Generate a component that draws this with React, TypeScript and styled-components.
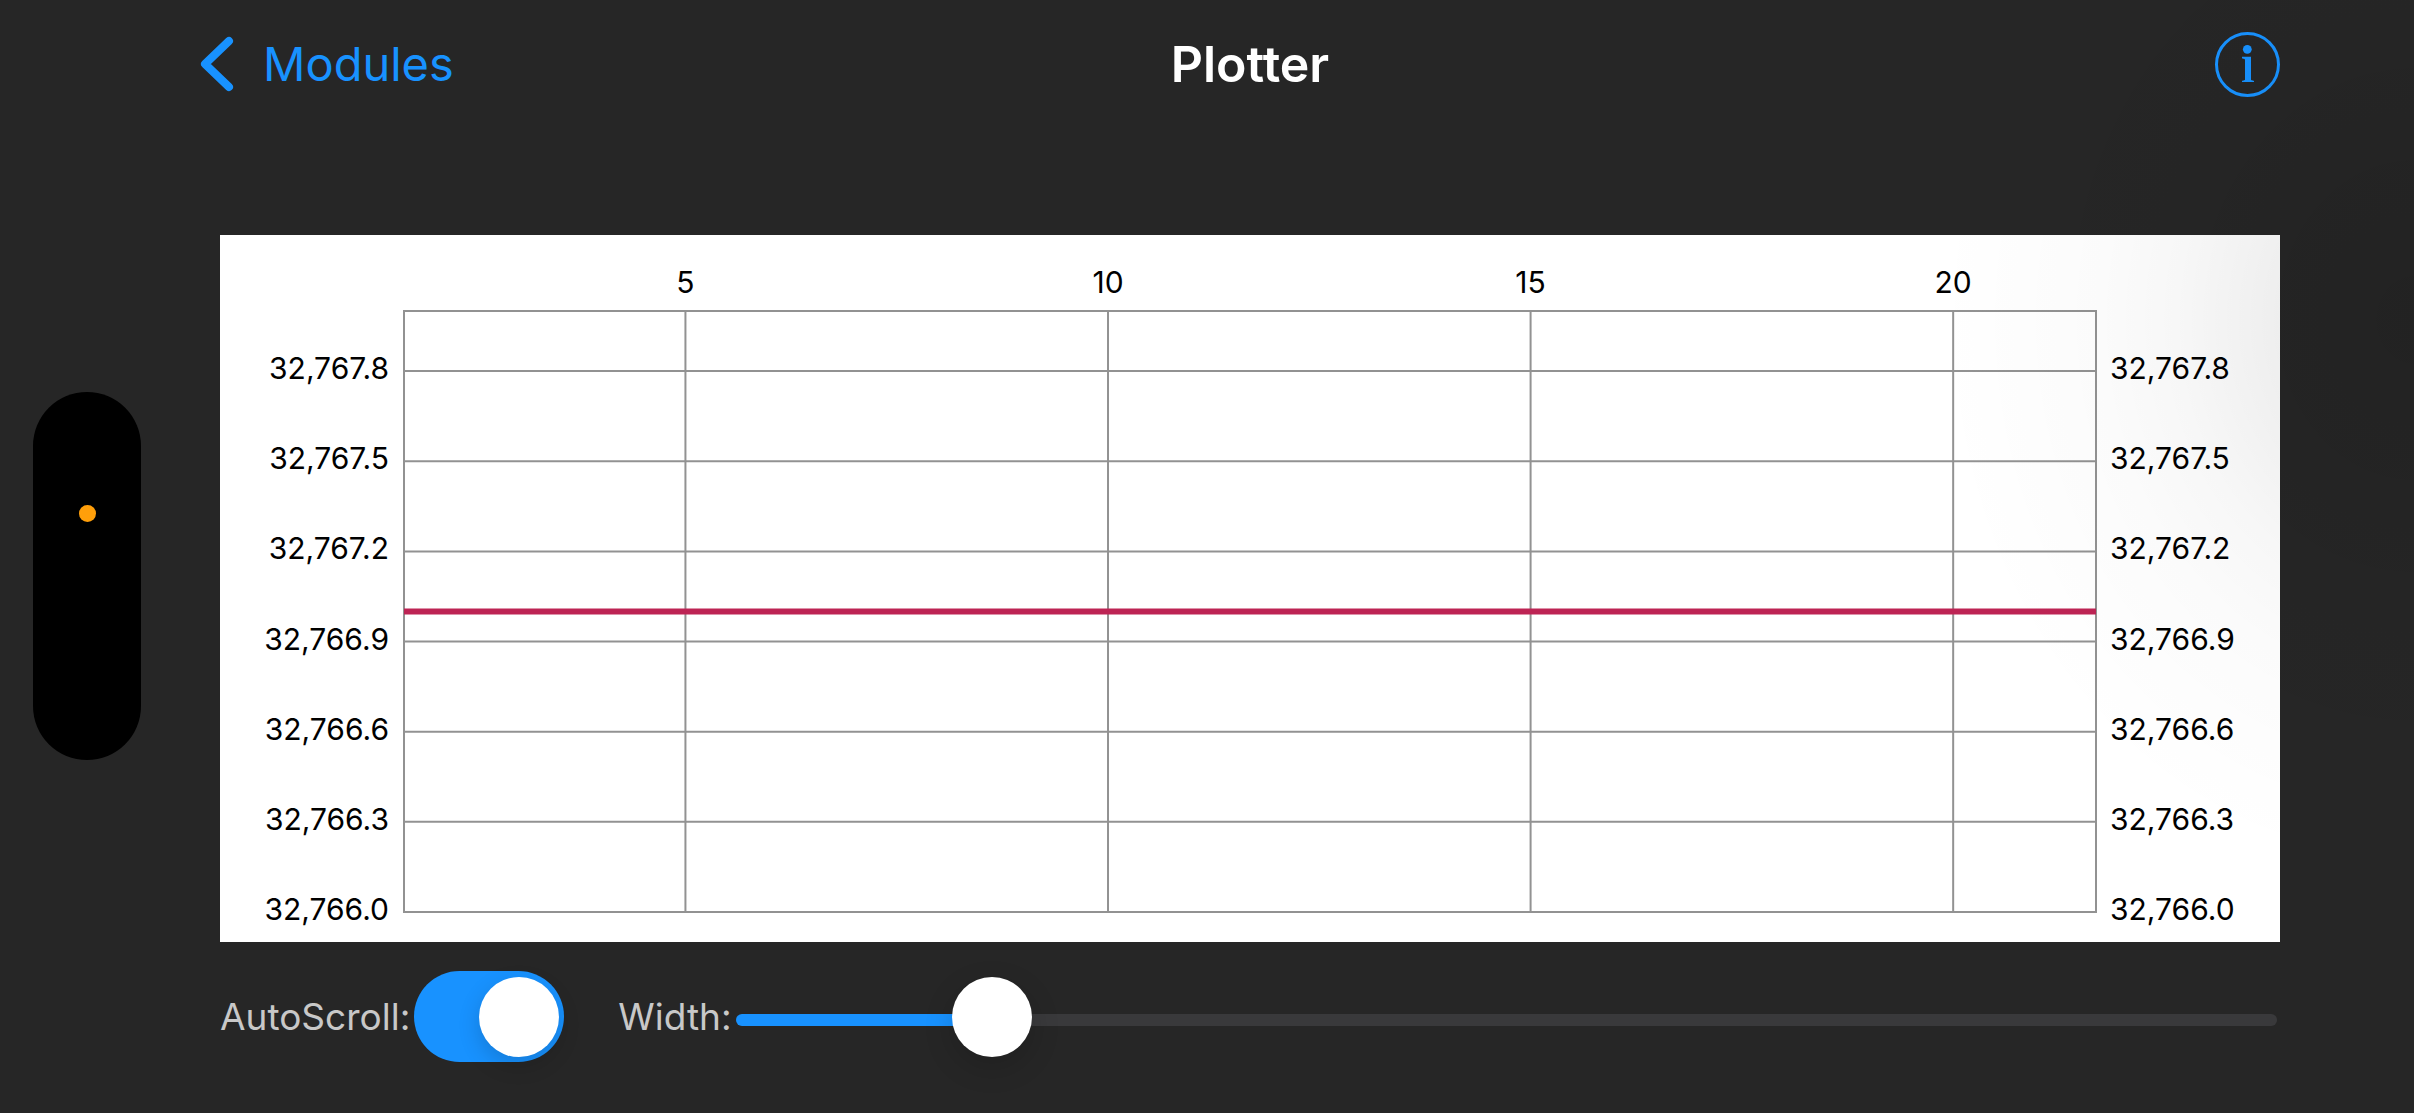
import React, { useState } from "react";
import styled, { createGlobalStyle } from "styled-components";

const BLUE = "#1892ff";

const GlobalStyle = createGlobalStyle`
  *, *::before, *::after { box-sizing: border-box; }
  body {
    margin: 0;
    background: #262626;
    font-family: Inter, "Liberation Sans", sans-serif;
  }
`;

const Screen = styled.div`
  position: relative;
  display: flex;
  min-height: 100vh;
  padding-right: 134px;
  background: #262626;
  overflow: hidden;
`;

const Shade = styled.div`
  position: absolute;
  inset: 0;
  pointer-events: none;
  background: radial-gradient(
    480px 560px at 100% 320px,
    rgba(0, 0, 0, 0.1),
    rgba(0, 0, 0, 0.065) 28%,
    rgba(0, 0, 0, 0.032) 50%,
    rgba(0, 0, 0, 0.014) 66%,
    rgba(0, 0, 0, 0)
  );
`;

const Gutter = styled.aside`
  flex: none;
  width: 220px;
  padding: 392px 0 0 33px;
`;

const Island = styled.div`
  display: flex;
  justify-content: center;
  width: 108px;
  height: 368px;
  padding-top: 113px;
  border-radius: 54px;
  background: #000;
`;

const Indicator = styled.span`
  width: 17px;
  height: 17px;
  border-radius: 50%;
  background: #ff9f0a;
`;

const Content = styled.div`
  flex: 1;
  min-width: 0;
  display: flex;
  flex-direction: column;
`;

const Header = styled.header`
  display: grid;
  grid-template-columns: 1fr auto 1fr;
  align-items: center;
  height: 128px;
`;

const BackButton = styled.button`
  justify-self: start;
  display: flex;
  align-items: center;
  gap: 29px;
  margin-left: -20px;
  padding: 0;
  border: 0;
  background: none;
  color: ${BLUE};
  font: 400 47px/60px Inter, "Liberation Sans", sans-serif;
  cursor: pointer;
`;

const Title = styled.h1`
  margin: 0;
  color: #fff;
  font-size: 50px;
  line-height: 60px;
  font-weight: 600;
`;

const InfoButton = styled.button`
  justify-self: end;
  display: flex;
  padding: 0;
  border: 0;
  background: none;
  color: ${BLUE};
  cursor: pointer;
`;

const ChartCard = styled.main`
  flex: 1;
  display: flex;
  min-height: 400px;
  margin-top: 107px;
  padding: 76px 184px 30px;
  background: #fff;
`;

const Plot = styled.svg`
  flex: 1;
  min-width: 0;
  overflow: visible;
  font-size: 30px;
`;

const Controls = styled.form`
  display: flex;
  align-items: center;
  height: 171px;
  padding: 0 3px 22px 0;
`;

const ControlLabel = styled.label`
  color: #c8c8c8;
  font-size: 37px;
  line-height: 48px;
`;

const Toggle = styled.input`
  appearance: none;
  flex: none;
  display: flex;
  align-items: center;
  width: 150px;
  height: 91px;
  margin: 0 54px 0 4px;
  padding: 0 5px;
  border-radius: 46px;
  background: #39393b;
  cursor: pointer;

  &::before {
    content: "";
    width: 80px;
    height: 80px;
    border-radius: 50%;
    background: #fff;
    box-shadow: 0 8px 22px rgba(0, 0, 0, 0.16);
  }
  &:checked {
    justify-content: flex-end;
    background: ${BLUE};
  }
`;

const Slider = styled.input`
  appearance: none;
  flex: 1;
  min-width: 0;
  height: 80px;
  margin: 0 0 0 4px;
  background: none;
  cursor: pointer;

  &::-webkit-slider-runnable-track {
    height: 12px;
    margin-top: 6px;
    border-radius: 6px;
    background: linear-gradient(
      to right,
      ${BLUE} var(--fill),
      #39393b var(--fill)
    );
  }
  &::-webkit-slider-thumb {
    appearance: none;
    width: 80px;
    height: 80px;
    margin-top: -37px;
    border-radius: 50%;
    background: #fff;
    box-shadow: 0 10px 30px rgba(0, 0, 0, 0.16);
  }
`;

const X_MIN = 1.67;
const X_MAX = 21.69;
const Y_MIN = 32766;
const Y_MAX = 32768;
const X_TICKS = [5, 10, 15, 20];
const Y_TICKS = [32767.8, 32767.5, 32767.2, 32766.9, 32766.6, 32766.3, 32766];

const xAt = (v: number) => `${((v - X_MIN) / (X_MAX - X_MIN)) * 100}%`;
const yAt = (v: number) => `${((Y_MAX - v) / (Y_MAX - Y_MIN)) * 100}%`;
const format = (v: number) =>
  v.toLocaleString("en-US", { minimumFractionDigits: 1, maximumFractionDigits: 1 });

function Chart({ value }: { value: number }) {
  return (
    <Plot role="img" aria-label="Sensor values">
      <g stroke="#929292" strokeWidth="2">
        {Y_TICKS.slice(0, -1).map((t) => (
          <line key={t} x1="0" x2="100%" y1={yAt(t)} y2={yAt(t)} />
        ))}
        {X_TICKS.map((t) => (
          <line key={t} x1={xAt(t)} x2={xAt(t)} y1="0" y2="100%" />
        ))}
        <rect width="100%" height="100%" fill="none" />
      </g>
      <line x1="0" x2="100%" y1={yAt(value)} y2={yAt(value)} stroke="#bd2454" strokeWidth="6" />
      <g fill="#000">
        {X_TICKS.map((t) => (
          <text key={t} x={xAt(t)} y="-18" textAnchor="middle">
            {t}
          </text>
        ))}
        {Y_TICKS.map((t) => (
          <React.Fragment key={t}>
            <text x="-15" y={yAt(t)} dy="8" textAnchor="end">
              {format(t)}
            </text>
            <text x="100%" y={yAt(t)} dx="14" dy="8">
              {format(t)}
            </text>
          </React.Fragment>
        ))}
      </g>
    </Plot>
  );
}

export default function App() {
  const [autoScroll, setAutoScroll] = useState(true);
  const [width, setWidth] = useState(148);

  return (
    <>
      <GlobalStyle />
      <Screen>
        <Gutter>
          <Island>
            <Indicator />
          </Island>
        </Gutter>
        <Content>
          <Header>
            <BackButton type="button">
              <svg width="34" height="56" viewBox="0 0 34 56" aria-hidden="true">
                <path
                  d="M29 5 5 28l24 23"
                  fill="none"
                  stroke="currentColor"
                  strokeWidth="8"
                  strokeLinecap="round"
                  strokeLinejoin="round"
                />
              </svg>
              Modules
            </BackButton>
            <Title>Plotter</Title>
            <InfoButton type="button" aria-label="Info">
              <svg width="65" height="65" viewBox="0 0 65 65" aria-hidden="true">
                <circle cx="32.5" cy="32.5" r="31" fill="none" stroke="currentColor" strokeWidth="3" />
                <circle cx="32.3" cy="17.3" r="4.4" fill="currentColor" />
                <path
                  d="M27 24.800h9v22.700c0 1.200 3 .9 3 1.600v1H27v-1c0-.7 3-.4 3-1.600V28c0-1.500-3-.9-3-1.900z"
                  fill="currentColor"
                />
              </svg>
            </InfoButton>
          </Header>
          <ChartCard>
            <Chart value={32767} />
          </ChartCard>
          <Controls>
            <ControlLabel htmlFor="autoscroll">AutoScroll:</ControlLabel>
            <Toggle
              id="autoscroll"
              type="checkbox"
              role="switch"
              checked={autoScroll}
              onChange={(e) => setAutoScroll(e.target.checked)}
            />
            <ControlLabel htmlFor="width">Width:</ControlLabel>
            <Slider
              id="width"
              type="range"
              min={0}
              max={1000}
              value={width}
              onChange={(e) => setWidth(Number(e.target.value))}
              style={{ "--fill": `calc(40px + (100% - 80px) * ${width / 1000})` } as React.CSSProperties}
            />
          </Controls>
        </Content>
        <Shade />
      </Screen>
    </>
  );
}
